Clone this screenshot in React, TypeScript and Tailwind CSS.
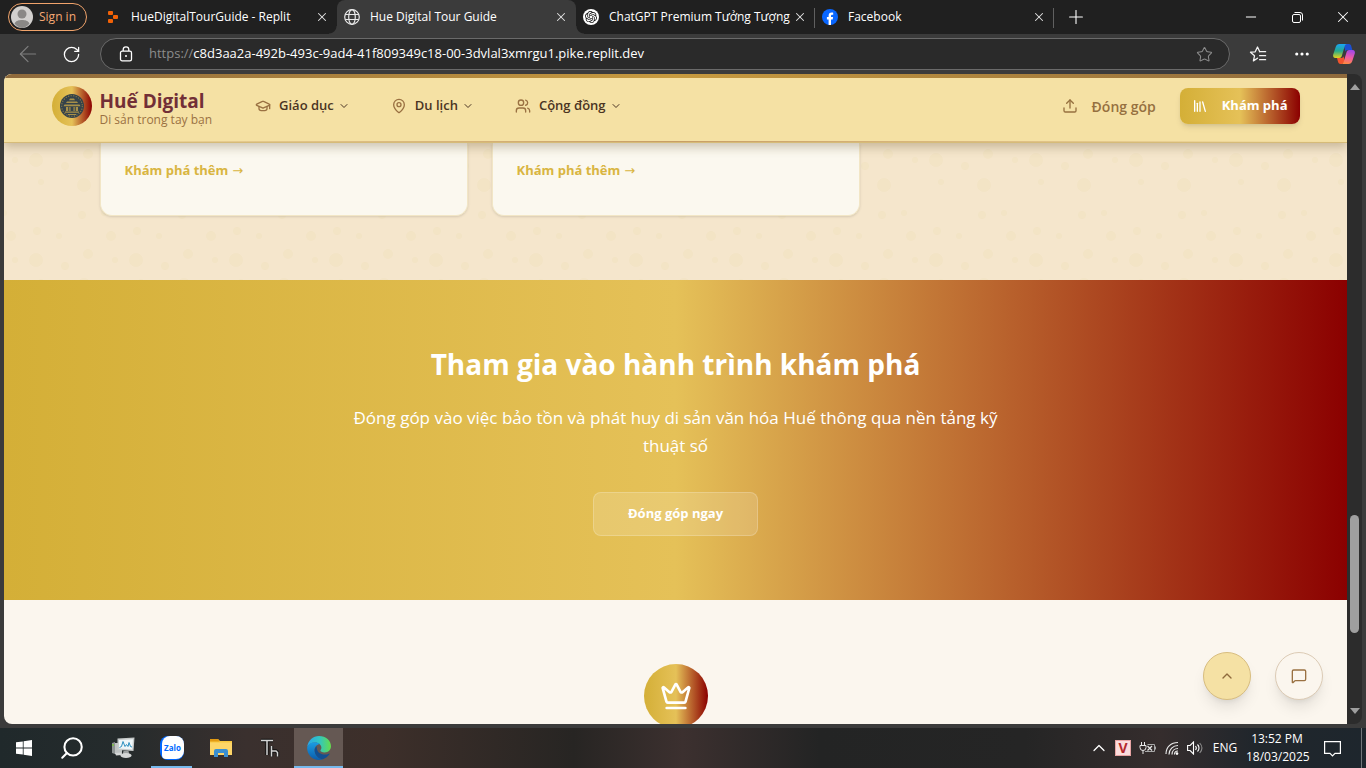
import React from "react";
import {
  ArrowLeft,
  ChevronDown,
  ChevronUp,
  Crown,
  GraduationCap,
  Library,
  MapPin,
  MessageSquare,
  Minus,
  MoreHorizontal,
  Plus,
  RotateCw,
  Search,
  Star,
  Upload,
  Users,
  X,
} from "lucide-react";
import { SiOpenai } from "react-icons/si";

const GOLD_RED = "bg-[linear-gradient(90deg,#d4af37_0%,#e5c158_50%,#8b0000_100%)]";

function ReplitIcon() {
  return (
    <svg viewBox="0 0 12 14" className="h-3.5 w-3">
      <g fill="#f26207">
        <rect x="1" y="1" width="5" height="4" rx="1" />
        <rect x="6" y="5" width="5" height="4" rx="1" />
        <rect x="1" y="9" width="5" height="4" rx="1" />
      </g>
    </svg>
  );
}

function GlobeIcon() {
  return (
    <svg viewBox="0 0 16 16" className="size-4" fill="none" stroke="#e8e8e8" strokeWidth="1.2">
      <circle cx="8" cy="8" r="7.3" />
      <ellipse cx="8" cy="8" rx="3.3" ry="7.3" />
      <path d="M1.300 5.500h13.400M1.300 10.500h13.400" />
    </svg>
  );
}

function OpenAiIcon() {
  return (
    <span className="flex size-4 items-center justify-center rounded-full bg-white text-[#111]">
      <SiOpenai size={12} />
    </span>
  );
}

function FacebookIcon() {
  return (
    <svg viewBox="0 0 16 16" className="size-4">
      <circle cx="8" cy="8" r="8" fill="#0866ff" />
      <path d="M6.6 16v-5.5H4.9V8h1.7V6.9c0-2.3 1-3.4 3.2-3.4.4 0 1.1.1 1.4.2v2.1h-.8c-1 0-1.400.4-1.400 1.400V8h2.100l-.4 2.500H9V16z" fill="#fff" />
    </svg>
  );
}

type TabProps = { icon: React.ReactNode; title: string; active?: boolean; divider?: boolean };

function BrowserTab({ icon, title, active, divider }: TabProps) {
  return (
    <li
      className={
        "relative flex h-full max-w-[239px] min-w-0 flex-1 items-center pr-2 pl-[7px] " +
        (active ? "rounded-t-lg bg-[#3b3b3b]" : "")
      }
    >
      <span className="flex w-4 shrink-0 justify-center">{icon}</span>
      <span className="ml-2.5 min-w-0 flex-1 truncate text-[12px] text-white">{title}</span>
      <button aria-label={`Close ${title}`} className="flex size-[14px] items-center justify-center text-[#e4e4e4]">
        <X size={14} strokeWidth={1.8} />
      </button>
      {active && (
        <>
          <span className="absolute bottom-0 -left-2 size-2 bg-[radial-gradient(circle_at_0_0,transparent_7px,#3b3b3b_8px)]" />
          <span className="absolute -right-2 bottom-0 size-2 bg-[radial-gradient(circle_at_100%_0,transparent_7px,#3b3b3b_8px)]" />
        </>
      )}
      {divider && <span className="absolute top-2 right-0 h-5 w-px bg-[#606060]" />}
    </li>
  );
}

function CopilotIcon() {
  return (
    <svg viewBox="0 0 24 24" className="size-6">
      <defs>
        <linearGradient id="cpA" x1="0" y1="0" x2="0" y2="1">
          <stop offset="0" stopColor="#1aa5f5" />
          <stop offset=".5" stopColor="#25a98c" />
          <stop offset="1" stopColor="#e8d21b" />
        </linearGradient>
        <linearGradient id="cpB" x1="0.500" y1="0" x2="0.300" y2="1">
          <stop offset="0" stopColor="#a348e8" />
          <stop offset=".5" stopColor="#ee5aa5" />
          <stop offset="1" stopColor="#ff8a3c" />
        </linearGradient>
      </defs>
      <path d="M14 2h3c1.300 0 2 1 2.300 2.200L20.300 8h-4.600c-1.200 0-1.800.6-2.200 1.700L12 4z" fill="#1c4fd0" />
      <path d="M10 22H8.500c-1.500 0-2.200-1-2.500-2.200L5 16h4.500c1 0 1.600-.6 2-1.700L13 20z" fill="#f2542d" />
      <path d="M7.500 2H15c-1.300 0-2 1-2.400 2.400L9.800 14c-.4 1.300-1.200 2-2.600 2H3.600C1.500 16 .7 14.400 1.200 12.500L3.700 5C4.300 3 5.500 2 7.500 2z" fill="url(#cpA)" />
      <path d="M16.500 22H9.400c1.300 0 2-1 2.400-2.400L14.600 10c.4-1.300 1.200-2 2.600-2h3.200c2.100 0 2.900 1.600 2.400 3.500L20.300 19c-.6 2-1.800 3-3.800 3z" fill="url(#cpB)" />
    </svg>
  );
}

function FavoritesIcon() {
  return (
    <svg viewBox="0 0 18 18" className="size-[18px]" fill="none" stroke="#f2f2f2" strokeWidth="1.300" strokeLinejoin="round" strokeLinecap="round">
      <path d="M8.500 13.200l-4.100 2.700 1.100-5.100L1.500 7.200l4.700-.4L8.500 2l2.100 4.600" />
      <path d="M10.600 6.700h6M10.600 10.700h6M10.600 14.700h6" />
    </svg>
  );
}

function LockIcon() {
  return (
    <svg viewBox="0 0 14 16" className="h-4 w-3.5" fill="none" stroke="#fff" strokeWidth="1.300">
      <rect x="1.500" y="5.200" width="11" height="9.600" rx="1.600" />
      <path d="M4.200 5V3.600a2.800 2.800 0 0 1 5.600 0V5" />
      <circle cx="7" cy="10" r="1" fill="#fff" stroke="none" />
    </svg>
  );
}

function RestoreIcon() {
  return (
    <svg viewBox="0 0 11 11" className="size-[11px]" fill="none" stroke="#fff" strokeWidth="1">
      <rect x="0.500" y="2.500" width="8" height="8" rx="1.500" />
      <path d="M2.500 .5H8A2.500 2.500 0 0 1 10.500 3v5.500" />
    </svg>
  );
}

function TitleBar() {
  return (
    <div className="flex h-[34px] shrink-0 items-center bg-[#202020]">
      <div className="flex w-[98px] shrink-0 pl-2">
        <button className="flex h-7 w-[79px] items-center gap-1.5 rounded-full border border-[#f0a36b] pl-0.5 text-[12px] text-[#f5a873]">
          <svg viewBox="0 0 22 22" className="size-[22px] shrink-0">
            <circle cx="11" cy="11" r="11" fill="#d2d0ce" />
            <circle cx="11" cy="8" r="4.500" fill="#8a8886" />
            <path d="M3.500 17.500C5 14.500 8 14 11 14s6 .5 7.500 3.500A11 11 0 0 1 11 22a11 11 0 0 1-7.500-4.500z" fill="#8a8886" />
          </svg>
          <span className="whitespace-nowrap">Sign in</span>
        </button>
      </div>
      <ul className="flex h-full min-w-0 flex-1">
        <BrowserTab icon={<ReplitIcon />} title="HueDigitalTourGuide - Replit" />
        <BrowserTab icon={<GlobeIcon />} title="Hue Digital Tour Guide" active />
        <BrowserTab icon={<OpenAiIcon />} title="ChatGPT Premium Tưởng Tượng" divider />
        <BrowserTab icon={<FacebookIcon />} title="Facebook" divider />
        <li className="flex w-11 shrink-0 items-center justify-center">
          <button aria-label="New tab" className="text-white">
            <Plus size={22} strokeWidth={1.2} />
          </button>
        </li>
      </ul>
      <div className="flex h-full shrink-0 text-white">
        <button aria-label="Minimize" className="flex w-[46px] items-center justify-center">
          <Minus size={16} strokeWidth={1.500} />
        </button>
        <button aria-label="Restore" className="flex w-[46px] items-center justify-center">
          <RestoreIcon />
        </button>
        <button aria-label="Close window" className="flex w-[46px] items-center justify-center">
          <X size={18} strokeWidth={1.400} />
        </button>
      </div>
    </div>
  );
}

function AddressBar() {
  return (
    <div className="flex h-10 shrink-0 items-center bg-[#3b3b3b]">
      <div className="flex w-[100px] shrink-0 items-center pl-[15px]">
        <button aria-label="Back" className="flex w-[26px] justify-center text-[#7e7e7e]">
          <ArrowLeft size={26} strokeWidth={1.100} />
        </button>
        <button aria-label="Refresh" className="ml-5 flex w-5 justify-center text-white">
          <RotateCw size={19} strokeWidth={1.600} />
        </button>
      </div>
      <div className="flex h-8 min-w-0 flex-1 items-center rounded-full border border-[#6a6a6a] bg-[#2a2a2a] pr-4 pl-[18px]">
        <LockIcon />
        <label className="ml-4 flex h-full min-w-0 flex-1 items-center text-[13px] whitespace-pre">
          <span className="text-[#8c8c8c]">https://</span>
          <input
            aria-label="Address"
            className="min-w-0 flex-1 bg-transparent text-white outline-none"
            defaultValue="c8d3aa2a-492b-493c-9ad4-41f809349c18-00-3dvlal3xmrgu1.pike.replit.dev"
          />
        </label>
        <button aria-label="Add to favorites" className="text-[#8c8c8c]">
          <Star size={17} strokeWidth={1.500} />
        </button>
      </div>
      <div className="flex w-[136px] shrink-0 items-center">
        <button aria-label="Favorites" className="ml-[19px]">
          <FavoritesIcon />
        </button>
        <button aria-label="Settings and more" className="ml-[26px] text-white">
          <MoreHorizontal size={18} strokeWidth={2.200} />
        </button>
        <button aria-label="Copilot" className="ml-[21px]">
          <CopilotIcon />
        </button>
      </div>
    </div>
  );
}

function HueSeal() {
  return (
    <svg viewBox="0 0 24 24" className="size-6">
      <circle cx="12" cy="12" r="12" fill="#34424a" />
      <circle cx="12" cy="12" r="10.300" fill="none" stroke="#8d7d48" strokeWidth="1.100" strokeDasharray="1.200 1.400" />
      <g fill="#a89048">
        <path d="M10 4.500h4l1 1.800H9zM7 7.500h10l1 1.600H6zM4.500 10.500h15l1 1.800h-17z" />
        <path d="M6 13h2.200v4H6zM15.800 13H18v4h-2.200zM9.300 13h1.200v4H9.300zM13.500 13h1.200v4h-1.200zM5 17.500h14v1.300H5zM8 20h8v.9H8z" />
      </g>
    </svg>
  );
}

function NavItem({ icon, label }: { icon: React.ReactNode; label: string }) {
  return (
    <button className="flex items-center text-[13px] font-semibold text-[#4a3423]">
      <span className="mr-2 text-[#9a7142]">{icon}</span>
      {label}
      <ChevronDown size={12} strokeWidth={2} className="ml-1" />
    </button>
  );
}

function SiteHeader() {
  return (
    <header className="relative z-10 shrink-0 border-b border-[#d6bb78] bg-[#f5e1a4] shadow-[0_4px_10px_rgba(90,70,30,0.3)]">
      <div className="h-1 bg-[linear-gradient(90deg,#8f6a3c,#c79a3e_50%,#8f6a3c)]" />
      <div className="mx-auto flex h-14 max-w-7xl items-center px-4">
        <a href="#home" className="flex items-center">
          <span className={"flex size-10 items-center justify-center rounded-full " + GOLD_RED}>
            <HueSeal />
          </span>
          <span className="ml-2 flex flex-col pt-1">
            <span className="text-[19px] leading-6 font-bold text-[#722f37]">Huế Digital</span>
            <span className="text-[12px] leading-[14px] text-[#9a7142]">Di sản trong tay bạn</span>
          </span>
        </a>
        <nav className="ml-[43px] flex items-center gap-[41px]">
          <NavItem icon={<GraduationCap size={16} />} label="Giáo dục" />
          <NavItem icon={<MapPin size={16} />} label="Du lịch" />
          <NavItem icon={<Users size={16} />} label="Cộng đồng" />
        </nav>
        <div className="ml-auto flex items-center">
          <button className="mr-6 flex items-center gap-3.5 text-[14px] font-semibold text-[#96703f]">
            <Upload size={16} />
            Đóng góp
          </button>
          <button className={"flex h-9 items-center gap-3.5 rounded-lg px-3 text-[13px] font-bold text-white shadow-md " + GOLD_RED}>
            <Library size={16} />
            Khám phá
          </button>
        </div>
      </div>
      <div className="h-[7px]" />
      <div className="h-px bg-[linear-gradient(90deg,transparent,#a8703c_50%,transparent)] opacity-60" />
    </header>
  );
}

const BUBBLES: [number, number, number][] = [
  [11, 11, 7],
  [59, 36, 7],
  [16, 33, 3],
  [79, 64, 3],
  [34, 87, 3],
  [90, 11, 3],
  [12, 82, 4],
  [40, 17, 4],
  [63, 5, 5],
  [57, 66, 4],
  [86, 87, 5],
];

function BubbleBackdrop() {
  return (
    <svg className="absolute inset-0 size-full" aria-hidden="true">
      <defs>
        <pattern id="bubbles" width="100" height="100" patternUnits="userSpaceOnUse" patternTransform="translate(21 6)">
          {BUBBLES.map(([x, y, r]) => (
            <circle key={`${x}-${y}`} cx={x} cy={y} r={r} fill="#f3e4c5" />
          ))}
        </pattern>
      </defs>
      <rect width="100%" height="100%" fill="url(#bubbles)" />
    </svg>
  );
}

function TopicCard() {
  return (
    <article className="rounded-b-xl border border-t-0 border-[#f2e6c6] bg-[#fbf8ef] px-6 pt-4 pb-8 shadow-sm">
      <a href="#more" className="flex h-6 items-center gap-1 text-[13px] font-bold text-[#d9b541]">
        Khám phá thêm <span className="font-['DejaVu_Sans'] font-normal">→</span>
      </a>
    </article>
  );
}

function WebPage() {
  return (
    <main className="relative flex min-w-0 flex-1 flex-col overflow-hidden rounded-l-lg bg-[#fbf6ee]">
      <SiteHeader />
      <section className="relative shrink-0 bg-[#f5e6cc] pb-16">
        <BubbleBackdrop />
        <div className="relative mx-auto grid max-w-6xl grid-cols-3 gap-6">
          <TopicCard />
          <TopicCard />
        </div>
      </section>
      <section className={"shrink-0 py-16 text-center text-white " + GOLD_RED}>
        <h2 className="text-[28px] leading-10 font-bold">Tham gia vào hành trình khám phá</h2>
        <p className="mx-auto mt-5 max-w-2xl text-[17px] leading-7">
          Đóng góp vào việc bảo tồn và phát huy di sản văn hóa Huế thông qua nền tảng kỹ thuật số
        </p>
        <button className="mt-8 h-11 rounded-lg border border-white/20 bg-white/15 px-[34px] text-[13px] font-bold">
          Đóng góp ngay
        </button>
      </section>
      <section className="flex flex-1 justify-center pt-16">
        <span className={"flex size-16 shrink-0 items-center justify-center rounded-full text-white " + GOLD_RED}>
          <Crown size={32} />
        </span>
      </section>
      <div className="absolute right-6 bottom-6 flex gap-6">
        <button
          aria-label="Back to top"
          className="flex size-12 items-center justify-center rounded-full border border-[#d8bd7f] bg-[#f5e1a4] text-[#8f6a3c] shadow-lg"
        >
          <ChevronUp size={16} />
        </button>
        <button
          aria-label="Open chat"
          className="flex size-12 items-center justify-center rounded-full border border-[#dccbb5] bg-[#fbf6ee] text-[#9a7142] shadow-lg"
        >
          <MessageSquare size={16} />
        </button>
      </div>
    </main>
  );
}

function Scrollbar() {
  return (
    <div className="flex w-[15px] shrink-0 flex-col items-center rounded-r-lg bg-[#2c2c2c] py-2.5" aria-hidden="true">
      <svg viewBox="0 0 10 6" className="h-1.5 w-2.5">
        <path d="M5 0l5 6H0z" fill="#9f9f9f" />
      </svg>
      <div className="grow-[425]" />
      <div className="w-[9px] grow-[118] rounded-full bg-[#9f9f9f]" />
      <div className="grow-[75]" />
      <svg viewBox="0 0 10 6" className="h-1.5 w-2.5">
        <path d="M5 6l5-6H0z" fill="#9f9f9f" />
      </svg>
    </div>
  );
}

function WindowsIcon() {
  return (
    <svg viewBox="0 0 16 16" className="size-4" fill="#fff">
      <path d="M0 2.300L6.800 1.400v6.200H0zM7.600 1.300L16 .1v7.500H7.600zM0 8.400h6.800v6.200L0 13.700zM7.600 8.400H16v7.500l-8.400-1.200z" />
    </svg>
  );
}

function MonitorIcon() {
  return (
    <svg viewBox="0 0 24 24" className="size-6">
      <path d="M1 7l3-1v12l-3-1z" fill="#8f9494" />
      <rect x="1.200" y="8" width="1.600" height="2" fill="#7ac143" />
      <path d="M4 7h7v11H4z" fill="#bfc3c3" />
      <path d="M6.500 2.500l17-1-1 13.500-16-1z" fill="#c6caca" />
      <path d="M8 4l14-.8-.8 10.200L8 12.600z" fill="#eef6f8" />
      <path d="M8.500 11.500l2-1 1.500-5 2 5 1.500-2 1.500 2 1-4 1.500 4 1.500.5" fill="none" stroke="#2a8fc0" />
      <path d="M12.500 15h5l1 4h-7z" fill="#9ea2a2" />
      <ellipse cx="15" cy="19.500" rx="5.500" ry="2.500" fill="#d5d7d7" />
      <path d="M4 17l6-.5 1 2.500-6 .5z" fill="#d5d7d7" />
    </svg>
  );
}

function ZaloIcon() {
  return (
    <span className="flex size-6 items-center justify-center rounded-[8px] bg-[#0068ff] pb-px pl-0.5">
      <span className="flex h-full w-full items-center justify-center rounded-[8px] rounded-bl-[4px] bg-white text-[8px] leading-none font-bold text-[#0068ff]">
        Zalo
      </span>
    </span>
  );
}

function FolderIcon() {
  return (
    <svg viewBox="0 0 22 20" className="h-5 w-[22px]">
      <path d="M0 1h8l2 2h12v14H0z" fill="#f8c73e" />
      <path d="M0 1h8l1.500 2.500H0z" fill="#e39a12" />
      <path d="M0 4.500h22V17H0z" fill="#fdd568" />
      <path d="M4 19v-6a2 2 0 0 1 2-2h10a2 2 0 0 1 2 2v6h-4v-4H8v4z" fill="#3a8fd0" />
    </svg>
  );
}

function EdgeIcon() {
  return (
    <svg viewBox="0 0 24 24" className="size-6">
      <defs>
        <linearGradient id="edTop" x1="0" y1=".5" x2="1" y2=".5">
          <stop offset="0" stopColor="#2aa6e8" />
          <stop offset=".5" stopColor="#30c5c4" />
          <stop offset="1" stopColor="#65dc4c" />
        </linearGradient>
        <linearGradient id="edLeft" x1="0" y1="0" x2="0" y2="1">
          <stop offset="0" stopColor="#1b9de2" />
          <stop offset="1" stopColor="#0b5cab" />
        </linearGradient>
      </defs>
      <path d="M.2 11C1 4.500 6 0 12 0c7 0 12 4.800 12 10.300 0 3.700-2.900 6.200-6.300 6.200-2.800 0-4.300-.9-4.300-1.900 0-.7 1-1.300 1-3.100 0-2.500-2.600-5.100-6.500-5.100-3.300 0-6.200 1.600-7.700 4.600z" fill="url(#edTop)" />
      <path d="M.1 11.500C1.200 8 4.200 6.300 7.900 6.300c2.200 0 4 .8 5.100 2C9.800 8.300 7.600 11 7.600 14c0 5 4 8.700 8.200 9.300-1.200.5-2.500.7-3.800.7C5.300 24 0 18.700.1 11.500z" fill="url(#edLeft)" />
      <path d="M9.800 10.300c-1.500 1.200-2.200 2.600-2.200 4 0 5 4.400 9 8.300 8.900 2.800-1 5-2.700 6.500-5 .3-.5-.1-.8-.6-.5-1.100.6-2.400.9-3.900.9-4.800 0-8.700-3-8.100-8.300z" fill="#124f91" />
    </svg>
  );
}

function TaskButton({ label, className, children }: { label: string; className?: string; children: React.ReactNode }) {
  return (
    <button aria-label={label} className={"relative flex h-full shrink-0 items-center justify-center " + (className ?? "w-[49px]")}>
      {children}
    </button>
  );
}

function BatteryIcon() {
  return (
    <svg viewBox="0 0 18 14" className="h-3.5 w-[18px]" fill="none" stroke="#e8e8e8">
      <path d="M2.500 1v3M5.500 1v3M1 4.500h6v2a3 3 0 0 1-6 0zM4 9.500V13" />
      <path d="M8.500 3.500h7v7H6M16.500 5.500v3" stroke="#a8a8a8" />
      <path d="M8.500 5l4.500 4.500M13 5L8.500 9.500" strokeWidth="1.200" />
    </svg>
  );
}

function WifiIcon() {
  return (
    <svg viewBox="0 0 14 14" className="size-3.5" fill="none" stroke="#e8e8e8" strokeWidth="1.200">
      <path d="M1 13C1 6 6 1.500 13 1.500M4 13.500c0-5 4-9 9-9M7 13.500c0-3.500 2.500-6 6-6" />
      <path d="M9.500 13.500c0-2 1.500-3.500 3.500-3.500" />
      <circle cx="12" cy="12.600" r="1.300" fill="#fff" stroke="none" />
    </svg>
  );
}

function SpeakerIcon() {
  return (
    <svg viewBox="0 0 17 14" className="h-3.5 w-[17px]" fill="none" stroke="#fff" strokeWidth="1.100">
      <path d="M.6 4.500h2.500L6.500 1v12L3.100 9.500H.6z" />
      <path d="M8.500 5c1 1.200 1 2.800 0 4" />
      <path d="M10.500 3.500c2 2 2 5 0 7" />
      <path d="M12.700 2c2.700 3 2.700 7 0 10" stroke="#8a8a8a" />
    </svg>
  );
}

function Taskbar() {
  return (
    <footer className="flex h-10 shrink-0 items-center bg-[linear-gradient(90deg,#20292b_0%,#252b2c_9%,#3a302e_18%,#3d2f2a_28%,#272523_42%,#3c302f_50%,#232424_60%,#252525_75%,#352d2d_85%,#20262c_92%,#1e262d_100%)] text-white">
      <TaskButton label="Start" className="w-12">
        <WindowsIcon />
      </TaskButton>
      <TaskButton label="Search" className="mr-0.5 w-12">
        <Search size={26} strokeWidth={1.900} className="-scale-x-100" />
      </TaskButton>
      <TaskButton label="Monitor">
        <MonitorIcon />
      </TaskButton>
      <TaskButton label="Zalo">
        <ZaloIcon />
        <span className="absolute inset-x-1 bottom-0 h-0.5 bg-[#76b9ed]" />
      </TaskButton>
      <TaskButton label="File Explorer">
        <FolderIcon />
      </TaskButton>
      <TaskButton label="Th">
        <svg viewBox="0 0 20 20" className="size-5" fill="none" stroke="#111" strokeWidth="3.400">
          <path d="M1 2.500h12M7 2.500V17M11.500 8v10.500M11.500 13h4.500l1.500 1.500v4" />
          <path d="M1 2.500h12M7 2.500V17M11.500 8v10.500M11.500 13h4.500l1.500 1.500v4" stroke="#d4d4d4" strokeWidth="1.500" />
        </svg>
      </TaskButton>
      <TaskButton label="Edge">
        <span className="absolute inset-0 bg-[#655853]" />
        <span className="relative">
          <EdgeIcon />
        </span>
        <span className="absolute inset-x-0 bottom-0 h-0.5 bg-[#76b9ed]" />
      </TaskButton>
      <div className="ml-auto flex h-full items-center text-[12px]">
        <button aria-label="Show hidden icons">
          <ChevronUp size={20} strokeWidth={1.500} />
        </button>
        <span className="ml-1.5 flex size-4 items-center justify-center border border-[#e7a3a3] bg-[#fbdcdc] text-[14px] leading-none font-bold text-[#b3282d]">
          V
        </span>
        <span className="ml-2">
          <BatteryIcon />
        </span>
        <span className="ml-2">
          <WifiIcon />
        </span>
        <span className="ml-2">
          <SpeakerIcon />
        </span>
        <button className="w-[42px] text-center">ENG</button>
        <button className="w-[62px] text-center leading-[18px] whitespace-nowrap">
          <time className="block">13:52 PM</time>
          <time className="block">18/03/2025</time>
        </button>
        <button aria-label="Notifications" className="ml-4">
          <svg viewBox="0 0 17 17" className="size-[17px]" fill="none" stroke="#fff" strokeWidth="1.200">
            <path d="M.6 1.600h15.800v11.800h-5.400L8.500 16 6 13.400H.6z" />
          </svg>
        </button>
        <span className="mr-1 ml-5 h-full w-px bg-[#71767a]" />
      </div>
    </footer>
  );
}

export default function App() {
  return (
    <div className="flex h-screen flex-col overflow-hidden bg-[#3b3b3b] font-['Open_Sans','Noto_Sans',sans-serif]">
      <TitleBar />
      <AddressBar />
      <div className="flex min-h-0 flex-1 px-1 pb-1">
        <WebPage />
        <Scrollbar />
      </div>
      <Taskbar />
    </div>
  );
}
